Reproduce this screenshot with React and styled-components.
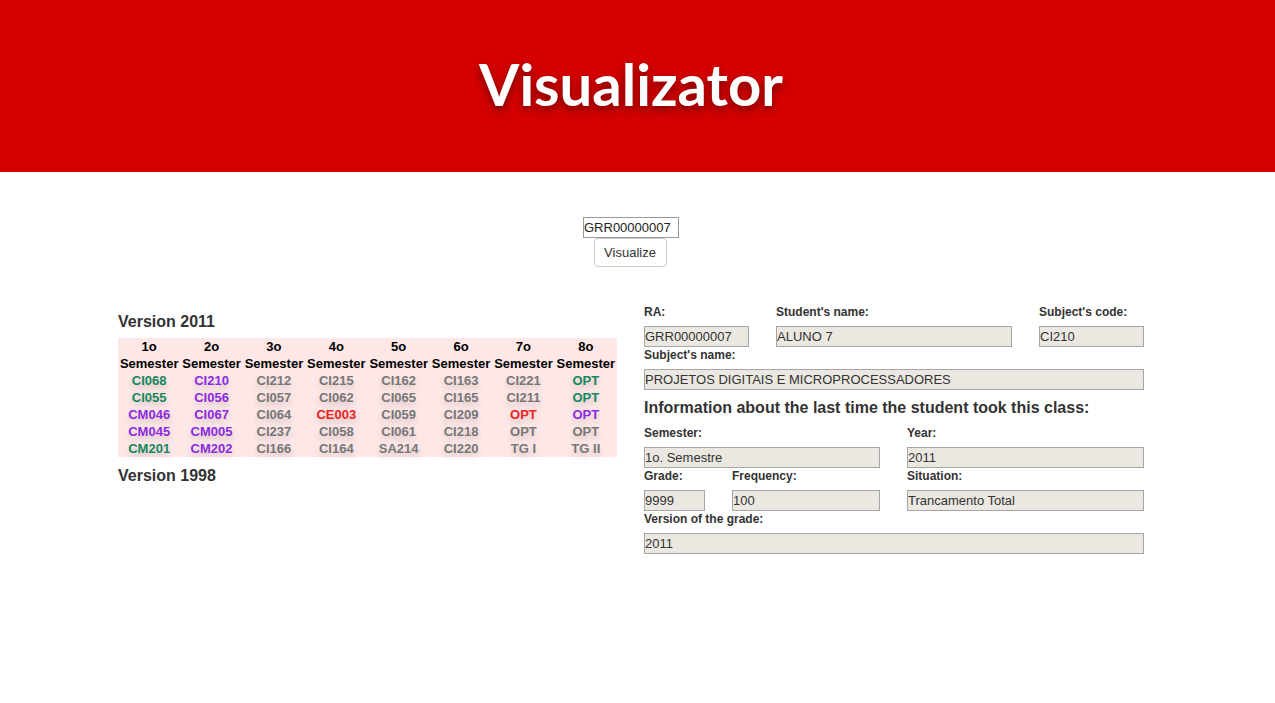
import React from "react";
import styled, { createGlobalStyle } from "styled-components";

const GlobalStyle = createGlobalStyle`
  body {
    margin: 0;
    background: #ffffff;
    font-family: "Liberation Sans", Arial, sans-serif;
    color: #333333;
  }
`;

const Cabecera = styled.header`
  background: #d40000;
  height: 172px;
  display: flex;
  align-items: center;
  justify-content: center;
  padding-right: 13px;
  padding-bottom: 6px;
  box-sizing: border-box;
`;

const Titulo = styled.h1`
  margin: 0;
  font-family: Lato, "Noto Sans", sans-serif;
  font-weight: 700;
  font-size: 58px;
  color: #ffffff;
  text-shadow: 0 4px 8px rgba(0, 0, 0, 0.45);
`;

const Pagina = styled.main`
  width: 1262px;
  display: flex;
  flex-direction: column;
  align-items: center;
`;

const Buscador = styled.form`
  display: flex;
  flex-direction: column;
  align-items: center;
  margin-top: 45px;
`;

const CampoBusqueda = styled.input`
  width: 96px;
  height: 21px;
  box-sizing: border-box;
  border: 1px solid #999999;
  padding: 0;
  font-family: "Liberation Sans", Arial, sans-serif;
  font-size: 13px;
  color: #222222;
  outline: none;
`;

const BotonVer = styled.button`
  width: 73px;
  height: 29px;
  margin-right: 2px;
  background: #ffffff;
  border: 1px solid #cccccc;
  border-radius: 4px;
  font-family: "Liberation Sans", Arial, sans-serif;
  font-size: 13px;
  color: #333333;
  padding: 0;
`;

const Columnas = styled.section`
  display: grid;
  grid-template-columns: 499px 500px;
  column-gap: 27px;
  margin-top: 37px;
`;

const Izquierda = styled.div`
  display: flex;
  flex-direction: column;
`;

const Version = styled.h3`
  margin: 0;
  font-size: 16px;
  line-height: 20px;
  font-weight: 700;
  color: #333333;
  padding: ${(p) => (p.$primero ? "8px 0 6px" : "9px 0 0")};
`;

const Tabla = styled.table`
  width: 499px;
  table-layout: fixed;
  border-collapse: collapse;
  background: #fde7e7;
  font-size: 13px;
  font-weight: 700;
  text-align: center;
`;

const Encabezado = styled.th`
  padding: 0;
  line-height: 17px;
  color: #000000;
  font-weight: 700;
`;

const colores = {
  verde: "#15875f",
  morado: "#8a2be2",
  gris: "#777777",
  rojo: "#ee2222",
};

const Celda = styled.td`
  padding: 0;
  line-height: 17px;
  color: ${(p) => colores[p.$tipo]};
  text-shadow: 0 4px 6px rgba(0, 0, 0, 0.16);
`;

const Derecha = styled.div`
  display: flex;
  flex-direction: column;
`;

const Fila = styled.div`
  display: grid;
  grid-template-columns: ${(p) => p.$cols};
  column-gap: 27px;
`;

const Grupo = styled.div`
  display: flex;
  flex-direction: column;
`;

const Etiqueta = styled.label`
  font-size: 12px;
  line-height: 14px;
  font-weight: 700;
  color: #333333;
  margin: 1px 0 7px;
`;

const Campo = styled.input`
  height: 21px;
  box-sizing: border-box;
  width: 100%;
  border: 1px solid #a6a6a6;
  background: #eae8e1;
  padding: 0;
  font-family: "Liberation Sans", Arial, sans-serif;
  font-size: 13px;
  color: #333333;
  outline: none;
`;

const Subtitulo = styled.h4`
  margin: 8px 0 7px;
  font-size: 16px;
  line-height: 20px;
  font-weight: 700;
  color: #333333;
`;

const semestres = ["1o", "2o", "3o", "4o", "5o", "6o", "7o", "8o"];

const grade = [
  [["CI068", "verde"], ["CI210", "morado"], ["CI212", "gris"], ["CI215", "gris"], ["CI162", "gris"], ["CI163", "gris"], ["CI221", "gris"], ["OPT", "verde"]],
  [["CI055", "verde"], ["CI056", "morado"], ["CI057", "gris"], ["CI062", "gris"], ["CI065", "gris"], ["CI165", "gris"], ["CI211", "gris"], ["OPT", "verde"]],
  [["CM046", "morado"], ["CI067", "morado"], ["CI064", "gris"], ["CE003", "rojo"], ["CI059", "gris"], ["CI209", "gris"], ["OPT", "rojo"], ["OPT", "morado"]],
  [["CM045", "morado"], ["CM005", "morado"], ["CI237", "gris"], ["CI058", "gris"], ["CI061", "gris"], ["CI218", "gris"], ["OPT", "gris"], ["OPT", "gris"]],
  [["CM201", "verde"], ["CM202", "morado"], ["CI166", "gris"], ["CI164", "gris"], ["SA214", "gris"], ["CI220", "gris"], ["TG I", "gris"], ["TG II", "gris"]],
];

const Dato = ({ etiqueta, valor }) => (
  <Grupo>
    <Etiqueta>{etiqueta}</Etiqueta>
    <Campo readOnly value={valor} />
  </Grupo>
);

const App = () => {
  return (
    <>
      <GlobalStyle />
      <Cabecera>
        <Titulo>Visualizator</Titulo>
      </Cabecera>
      <Pagina>
        <Buscador onSubmit={(e) => e.preventDefault()}>
          <CampoBusqueda defaultValue="GRR00000007" />
          <BotonVer type="submit">Visualize</BotonVer>
        </Buscador>
        <Columnas>
          <Izquierda>
            <Version $primero>Version 2011</Version>
            <Tabla>
              <thead>
                <tr>
                  {semestres.map((s) => (
                    <Encabezado key={s}>
                      {s}
                      <br />
                      Semester
                    </Encabezado>
                  ))}
                </tr>
              </thead>
              <tbody>
                {grade.map((fila, i) => (
                  <tr key={i}>
                    {fila.map(([codigo, tipo], j) => (
                      <Celda key={j} $tipo={tipo}>
                        {codigo}
                      </Celda>
                    ))}
                  </tr>
                ))}
              </tbody>
            </Tabla>
            <Version>Version 1998</Version>
          </Izquierda>
          <Derecha>
            <Fila $cols="105px 1fr 105px">
              <Dato etiqueta="RA:" valor="GRR00000007" />
              <Dato etiqueta="Student's name:" valor="ALUNO 7" />
              <Dato etiqueta="Subject's code:" valor="CI210" />
            </Fila>
            <Dato
              etiqueta="Subject's name:"
              valor="PROJETOS DIGITAIS E MICROPROCESSADORES"
            />
            <Subtitulo>
              Information about the last time the student took this class:
            </Subtitulo>
            <Fila $cols="236px 1fr">
              <Dato etiqueta="Semester:" valor="1o. Semestre" />
              <Dato etiqueta="Year:" valor="2011" />
            </Fila>
            <Fila $cols="61px 148px 1fr">
              <Dato etiqueta="Grade:" valor="9999" />
              <Dato etiqueta="Frequency:" valor="100" />
              <Dato etiqueta="Situation:" valor="Trancamento Total" />
            </Fila>
            <Dato etiqueta="Version of the grade:" valor="2011" />
          </Derecha>
        </Columnas>
      </Pagina>
    </>
  );
};

export default App;
